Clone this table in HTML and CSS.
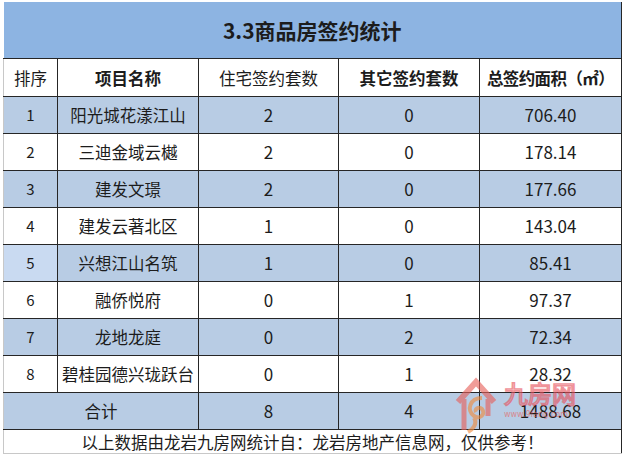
FILE: index.html
```html
<!DOCTYPE html>
<html lang="zh">
<head>
<meta charset="utf-8">
<title>3.3商品房签约统计</title>
<link rel="stylesheet" href="styles.css">
</head>
<body>
<div class="sheet">
  <table class="stats">
    <colgroup>
      <col class="c1"><col class="c2"><col class="c3"><col class="c4"><col class="c5">
    </colgroup>
    <tr class="title"><td colspan="5">3.3商品房签约统计</td></tr>
    <tr class="head">
      <td class="first">排序</td>
      <td class="b">项目名称</td>
      <td>住宅签约套数</td>
      <td class="b">其它签约套数</td>
      <td class="b area">总签约面积（㎡）</td>
    </tr>
    <tr class="blue"><td class="first num-s">1</td><td>阳光城花漾江山</td><td class="n">2</td><td class="n">0</td><td class="n">706.40</td></tr>
    <tr class="white"><td class="first num-s">2</td><td>三迪金域云樾</td><td class="n">2</td><td class="n">0</td><td class="n">178.14</td></tr>
    <tr class="blue"><td class="first num-s">3</td><td>建发文璟</td><td class="n">2</td><td class="n">0</td><td class="n">177.66</td></tr>
    <tr class="white"><td class="first num-s">4</td><td>建发云著北区</td><td class="n">1</td><td class="n">0</td><td class="n">143.04</td></tr>
    <tr class="blue"><td class="first num-s sel">5</td><td>兴想江山名筑</td><td class="n">1</td><td class="n">0</td><td class="n">85.41</td></tr>
    <tr class="white"><td class="first num-s">6</td><td>融侨悦府</td><td class="n">0</td><td class="n">1</td><td class="n">97.37</td></tr>
    <tr class="blue"><td class="first num-s">7</td><td>龙地龙庭</td><td class="n">0</td><td class="n">2</td><td class="n">72.34</td></tr>
    <tr class="white"><td class="first num-s">8</td><td>碧桂园德兴珑跃台</td><td class="n">0</td><td class="n">1</td><td class="n">28.32</td></tr>
    <tr class="blue total"><td class="first" colspan="2">合计</td><td class="n">8</td><td class="n">4</td><td class="n">1488.68</td></tr>
    <tr class="foot"><td class="first" colspan="5">以上数据由龙岩九房网统计自：龙岩房地产信息网，仅供参考！</td></tr>
  </table>
  <div class="watermark">
    <svg width="140" height="62" viewBox="0 0 140 62">
      <g opacity="0.62">
        <path d="M6 30 L24 10 L42 30" fill="none" stroke="#e8605a" stroke-width="6" stroke-linejoin="miter"/>
        <path d="M12 27 V58 M36 27 V44" fill="none" stroke="#e8605a" stroke-width="5"/>
        <path d="M30 26 C18 26 14 38 22 44 C28 48 34 42 30 37 C27 34 22 37 24 40" fill="none" stroke="#f08a3c" stroke-width="4"/>
        <path d="M22 46 C26 52 20 58 16 60" fill="none" stroke="#f08a3c" stroke-width="4"/>
        <text x="52" y="31" class="wm-text">九房网</text>
        <text x="52" y="45" class="wm-small">www.9fang.com</text>
      </g>
    </svg>
  </div>
</div>
</body>
</html>
```
FILE: styles.css
```css
html, body {
  margin: 0;
  padding: 0;
  background: #ffffff;
}
body {
  width: 625px;
  height: 458px;
  overflow: hidden;
  font-family: "Noto Sans CJK SC", "Noto Sans", sans-serif;
  color: #1c1c1c;
}
.sheet {
  position: relative;
  padding: 2px 0 0 3px;
}
.stats {
  border-collapse: collapse;
  table-layout: fixed;
  width: 618px;
}
.c1 { width: 54px; }
.c2 { width: 141px; }
.c3 { width: 140px; }
.c4 { width: 141px; }
.c5 { width: 142px; }
.stats td {
  border: 1px solid #262626;
  text-align: center;
  vertical-align: middle;
  padding: 0;
  font-size: 16.5px;
  line-height: 20px;
  height: 36px;
  white-space: nowrap;
  overflow: hidden;
}
.stats td.first {
  border-left: 1px solid #c8c8c8;
}
.title td {
  background: #8db4e2;
  height: 56px;
  font-size: 21px;
  font-weight: 700;
  border-top: none;
  border-left: none;
  border-right: 1px solid #262626;
}
.head td {
  height: 37px;
  background: #ffffff;
}
.head .b { font-weight: 700; }
.head .area { letter-spacing: -0.6px; }
.blue td { background: #b8cce4; }
.white td { background: #ffffff; }
.blue td.sel { background: #c9daf1; }
.num-s { font-size: 15px !important; }
.n { font-size: 17px !important; }
.total td { height: 36px; }
.foot td {
  height: 23px;
  background: #ffffff;
  border-bottom: 1px solid #c8c8c8;
  font-size: 16.5px;
}
.watermark {
  position: absolute;
  left: 452px;
  top: 372px;
  width: 140px;
  height: 62px;
  pointer-events: none;
}
.wm-text {
  font-family: "Noto Sans CJK SC", sans-serif;
  font-size: 24px;
  fill: #ffffff;
  stroke: #e8505a;
  stroke-width: 1.6px;
}
.wm-small {
  font-family: "DejaVu Sans", sans-serif;
  font-size: 8px;
  fill: #e8605a;
}
```
